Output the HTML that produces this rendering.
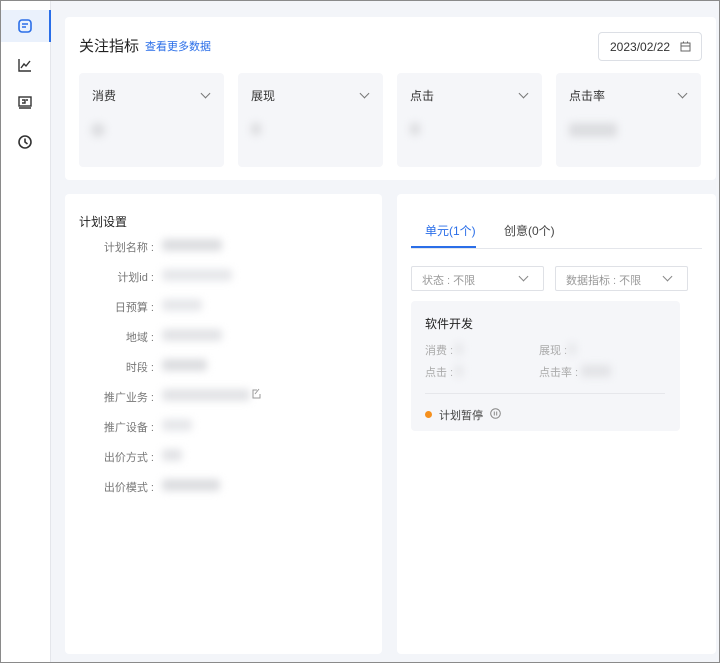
<!DOCTYPE html>
<html><head><meta charset="utf-8"><style>
*{margin:0;padding:0;box-sizing:border-box}
body{width:720px;height:663px;overflow:hidden;background:#f3f5f9;font-family:"Liberation Sans","Noto Sans CJK SC",sans-serif;position:relative;color:#333}
.frame{position:absolute;left:0;top:0;width:720px;height:663px;border:1px solid #8a8a8a;pointer-events:none;z-index:9}
.side{position:absolute;left:0;top:0;width:51px;height:663px;background:#fff;border-right:1px solid #e4e6eb}
.sel{position:absolute;left:0;top:10px;width:51px;height:32px;background:#eaf1fc;border-right:2px solid #2a6ee8}
.ic{position:absolute;left:17px}
.card{position:absolute;background:#fff;border-radius:4px}
.blur{position:absolute;background:#dcdde0;filter:blur(4px);border-radius:3px}
.m{position:absolute;top:56px;width:145px;height:94px;background:#f5f6f9;border-radius:4px}
.m span{position:absolute;left:13px;top:14px;font-size:12px;color:#333}
.chev{position:absolute;right:15px;top:17px;width:7px;height:7px;border-right:1px solid #777;border-bottom:1px solid #777;transform:rotate(45deg)}
.lbl{position:absolute;right:228px;font-size:11px;color:#777;text-align:right;white-space:nowrap}
.sel2{position:absolute;top:266px;height:25px;border:1px solid #dfe1e6;border-radius:2px;font-size:11px;color:#999;padding:5px 0 0 10px}
.sel2 .chev{top:6px;right:16px;border-color:#888}
.k{position:absolute;font-size:11px;color:#aaa}
</style></head><body>
<div class="side">
<div class="sel"></div>
<svg class="ic" style="top:18px" width="16" height="16" viewBox="0 0 16 16" fill="none" stroke="#2a6ee8" stroke-width="1.6"><rect x="2" y="2" width="12" height="12" rx="3"/><path d="M5 6h6M5 9h4"/></svg>
<svg class="ic" style="top:57px" width="16" height="16" viewBox="0 0 16 16" fill="none" stroke="#333" stroke-width="1.4"><path d="M2 2v12h12M4 11l3-4 2 2 4-5"/></svg>
<svg class="ic" style="top:95px" width="16" height="16" viewBox="0 0 16 16" fill="none" stroke="#333" stroke-width="1.4"><rect x="2" y="2" width="12" height="9"/><path d="M2 13h12M5 5h3v3H5M9 5h2"/></svg>
<svg class="ic" style="top:134px" width="16" height="16" viewBox="0 0 16 16" fill="none" stroke="#333" stroke-width="1.6"><circle cx="8" cy="8" r="6"/><path d="M8 4.5V8l2.5 2"/></svg>
</div>
<div class="card" style="left:65px;top:17px;width:651px;height:163px">
<div style="position:absolute;left:14px;top:18px;font-size:15px;color:#222">关注指标</div>
<div style="position:absolute;left:80px;top:21px;font-size:11px;color:#2a6ee8">查看更多数据</div>
<div style="position:absolute;left:533px;top:15px;width:104px;height:29px;border:1px solid #dcdfe5;border-radius:4px;font-size:12px;color:#333;padding:7px 0 0 11px">2023/02/22
<svg style="position:absolute;right:10px;top:8px" width="11" height="11" viewBox="0 0 11 11" fill="none" stroke="#666"><rect x="1" y="2" width="9" height="8"/><path d="M1 5h9M3.5 0.5v2M7.5 0.5v2"/></svg></div>
<div class="m" style="left:14px"><span>消费</span><i class="chev"></i><div class="blur" style="left:12px;top:50px;width:14px;height:14px;border-radius:50%"></div></div>
<div class="m" style="left:173px"><span>展现</span><i class="chev"></i><div class="blur" style="left:13px;top:50px;width:10px;height:12px"></div></div>
<div class="m" style="left:332px"><span>点击</span><i class="chev"></i><div class="blur" style="left:13px;top:50px;width:10px;height:12px"></div></div>
<div class="m" style="left:491px"><span>点击率</span><i class="chev"></i><div class="blur" style="left:13px;top:50px;width:48px;height:14px"></div></div>
</div>
<div class="card" style="left:65px;top:194px;width:317px;height:460px">
<div style="position:absolute;left:14px;top:19px;font-size:12px;color:#222">计划设置</div>
<div class="lbl" style="top:45px">计划名称 :</div><div class="blur" style="left:97px;top:45px;width:60px;height:12px"></div>
<div class="lbl" style="top:75px">计划id :</div><div class="blur" style="left:97px;top:75px;width:70px;height:12px;background:#e6e7ea"></div>
<div class="lbl" style="top:105px">日预算 :</div><div class="blur" style="left:97px;top:105px;width:40px;height:12px;background:#e6e7ea"></div>
<div class="lbl" style="top:135px">地域 :</div><div class="blur" style="left:97px;top:135px;width:60px;height:12px;background:#e2e3e6"></div>
<div class="lbl" style="top:165px">时段 :</div><div class="blur" style="left:97px;top:165px;width:45px;height:12px"></div>
<div class="lbl" style="top:195px">推广业务 :</div><div class="blur" style="left:97px;top:195px;width:88px;height:12px;background:#e2e3e6"></div>
<svg style="position:absolute;left:186px;top:194px" width="10" height="11" viewBox="0 0 10 11" fill="none" stroke="#999"><path d="M8 1L4 6M6 2H2v8h7V6"/></svg>
<div class="lbl" style="top:225px">推广设备 :</div><div class="blur" style="left:97px;top:225px;width:30px;height:12px;background:#e6e7ea"></div>
<div class="lbl" style="top:255px">出价方式 :</div><div class="blur" style="left:97px;top:255px;width:20px;height:12px;background:#e2e3e6"></div>
<div class="lbl" style="top:285px">出价模式 :</div><div class="blur" style="left:97px;top:285px;width:58px;height:12px"></div>
</div>
<div class="card" style="left:397px;top:194px;width:319px;height:460px">
<div style="position:absolute;left:14px;top:54px;width:291px;height:1px;background:#e4e6eb"></div>
<div style="position:absolute;left:28px;top:28px;font-size:12px;color:#2a6ee8">单元(1个)</div>
<div style="position:absolute;left:14px;top:52px;width:65px;height:2px;background:#2a6ee8"></div>
<div style="position:absolute;left:107px;top:28px;font-size:12px;color:#444">创意(0个)</div>
</div>
<div class="sel2" style="left:411px;width:133px">状态 : 不限<i class="chev"></i></div>
<div class="sel2" style="left:555px;width:133px">数据指标 : 不限<i class="chev"></i></div>
<div style="position:absolute;left:411px;top:301px;width:269px;height:130px;background:#f5f6f9;border-radius:4px">
<div style="position:absolute;left:14px;top:14px;font-size:12px;color:#222">软件开发</div>
<div class="k" style="left:14px;top:41px">消费 :</div><div class="blur" style="left:44px;top:42px;width:8px;height:12px;background:#e6e7ea"></div>
<div class="k" style="left:128px;top:41px">展现 :</div><div class="blur" style="left:157px;top:42px;width:8px;height:12px;background:#e6e7ea"></div>
<div class="k" style="left:14px;top:63px">点击 :</div><div class="blur" style="left:44px;top:64px;width:8px;height:12px;background:#e6e7ea"></div>
<div class="k" style="left:128px;top:63px">点击率 :</div><div class="blur" style="left:170px;top:64px;width:30px;height:12px;background:#e2e3e6"></div>
<div style="position:absolute;left:14px;top:92px;width:240px;height:1px;background:#e6e7eb"></div>
<div style="position:absolute;left:14px;top:110px;width:7px;height:7px;border-radius:50%;background:#f5901e"></div>
<div style="position:absolute;left:28px;top:106px;font-size:11px;color:#444">计划暂停</div>
<svg style="position:absolute;left:79px;top:107px" width="11" height="11" viewBox="0 0 11 11" fill="none" stroke="#888"><circle cx="5.5" cy="5.5" r="4.8"/><path d="M4.3 3.5v4M6.7 3.5v4"/></svg>
</div>
<div class="frame"></div>
</body></html>
